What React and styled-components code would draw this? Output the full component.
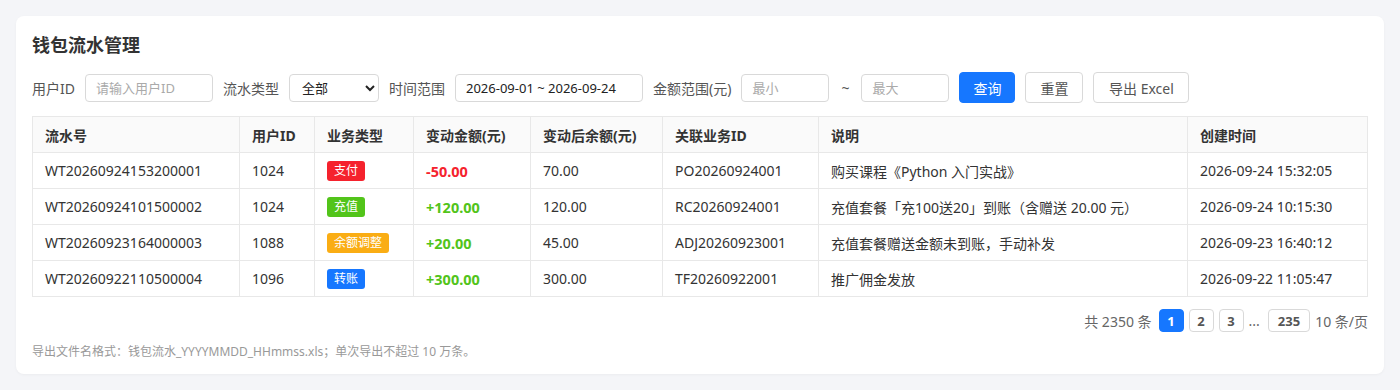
import React, { useState } from "react";
import styled, { createGlobalStyle } from "styled-components";

const GlobalStyle = createGlobalStyle`
  body {
    margin: 0;
    background: #f4f5f8;
    font-family: "Noto Sans", "Noto Sans CJK SC", sans-serif;
    color: #333;
  }
`;

const Page = styled.div`
  padding: 16px;
`;

const Card = styled.div`
  background: #fff;
  border-radius: 8px;
  padding: 16px 16px 14px;
  box-shadow: 0 1px 3px rgba(0, 0, 0, 0.04);
`;

const Title = styled.h2`
  margin: 0 0 14px;
  font-size: 18px;
  font-weight: 700;
  color: #333;
  line-height: 26px;
`;

const Filters = styled.div`
  display: flex;
  align-items: center;
  gap: 10px;
  margin-bottom: 13px;
`;

const Label = styled.span`
  font-size: 14px;
  color: #555;
`;

const Field = styled.input`
  box-sizing: border-box;
  width: ${(p) => p.$w}px;
  height: 28px;
  border: 1px solid #d9d9d9;
  border-radius: 4px;
  padding: 0 10px;
  font: inherit;
  font-size: 13px;
  color: #222;
  &::placeholder {
    color: #aaa;
  }
`;

const Select = styled.select`
  box-sizing: border-box;
  width: 90px;
  height: 28px;
  border: 1px solid #d9d9d9;
  border-radius: 4px;
  padding: 0 8px;
  font: inherit;
  font-size: 13px;
  color: #222;
  background: #fff;
`;

const Tilde = styled.span`
  font-size: 14px;
  color: #555;
  padding: 0 2px;
`;

const Button = styled.button`
  box-sizing: border-box;
  height: 31px;
  min-width: ${(p) => p.$min || 0}px;
  padding: 0 13px;
  border-radius: 4px;
  font: inherit;
  font-size: 14px;
  cursor: pointer;
  border: 1px solid ${(p) => (p.$primary ? "#1677ff" : "#d9d9d9")};
  background: ${(p) => (p.$primary ? "#1677ff" : "#fff")};
  color: ${(p) => (p.$primary ? "#fff" : "#555")};
`;

const Table = styled.table`
  width: 100%;
  table-layout: fixed;
  border-collapse: collapse;
  font-size: 14px;
`;

const Th = styled.th`
  text-align: left;
  font-weight: 700;
  background: #fafafa;
  border: 1px solid #e8e8e8;
  padding: 0 12px;
  height: 35px;
  color: #333;
  white-space: nowrap;
  width: ${(p) => (p.$w ? `${p.$w - 25}px` : "auto")};
`;

const Td = styled.td`
  border: 1px solid #e8e8e8;
  padding: 0 12px;
  height: 35px;
  color: #333;
  white-space: nowrap;
  overflow: hidden;
`;

const Tag = styled.span`
  display: inline-block;
  padding: 0 7px;
  height: 20px;
  line-height: 20px;
  border-radius: 3px;
  font-size: 12px;
  color: #fff;
  background: ${(p) => p.$color};
  vertical-align: middle;
`;

const Amount = styled.span`
  font-weight: 700;
  font-size: 14.5px;
  color: ${(p) => (p.$neg ? "#f5222d" : "#52c41a")};
`;

const Pager = styled.div`
  display: flex;
  justify-content: flex-end;
  align-items: center;
  gap: 5px;
  margin-top: 12px;
  font-size: 14px;
  color: #666;
`;

const Total = styled.span`
  margin-right: 2px;
`;

const PageBtn = styled.button`
  box-sizing: border-box;
  min-width: 25px;
  height: 23px;
  padding: 0 ${(p) => (p.$wide ? 9 : 4)}px;
  border-radius: 4px;
  font: inherit;
  font-size: 13px;
  font-weight: 700;
  border: 1px solid ${(p) => (p.$active ? "#1677ff" : "#d9d9d9")};
  background: ${(p) => (p.$active ? "#1677ff" : "#fff")};
  color: ${(p) => (p.$active ? "#fff" : "#555")};
`;

const Dots = styled.span`
  padding: 0 3px 0 0;
`;

const Note = styled.div`
  margin-top: 10px;
  font-size: 12px;
  color: #999;
`;

const TAGS = {
  支付: "#f5222d",
  充值: "#52c41a",
  余额调整: "#faad14",
  转账: "#1677ff",
};

const rows = [
  ["WT20260924153200001", "1024", "支付", "-50.00", "70.00", "PO20260924001", "购买课程《Python 入门实战》", "2026-09-24 15:32:05"],
  ["WT20260924101500002", "1024", "充值", "+120.00", "120.00", "RC20260924001", "充值套餐「充100送20」到账（含赠送 20.00 元）", "2026-09-24 10:15:30"],
  ["WT20260923164000003", "1088", "余额调整", "+20.00", "45.00", "ADJ20260923001", "充值套餐赠送金额未到账，手动补发", "2026-09-23 16:40:12"],
  ["WT20260922110500004", "1096", "转账", "+300.00", "300.00", "TF20260922001", "推广佣金发放", "2026-09-22 11:05:47"],
];

export default function App() {
  const [userId, setUserId] = useState("");
  const [range, setRange] = useState("2026-09-01 ~ 2026-09-24");

  return (
    <Page>
      <GlobalStyle />
      <Card>
        <Title>钱包流水管理</Title>
        <Filters>
          <Label>用户ID</Label>
          <Field $w={128} placeholder="请输入用户ID" value={userId} onChange={(e) => setUserId(e.target.value)} />
          <Label>流水类型</Label>
          <Select defaultValue="全部">
            <option>全部</option>
            <option>支付</option>
            <option>充值</option>
          </Select>
          <Label>时间范围</Label>
          <Field $w={188} value={range} onChange={(e) => setRange(e.target.value)} />
          <Label>金额范围(元)</Label>
          <Field $w={88} placeholder="最小" />
          <Tilde>~</Tilde>
          <Field $w={88} placeholder="最大" />
          <Button $primary $min={56}>查询</Button>
          <Button $min={58}>重置</Button>
          <Button $min={96}>导出 Excel</Button>
        </Filters>
        <Table>
          <thead>
            <tr>
              <Th $w={207}>流水号</Th>
              <Th $w={75}>用户ID</Th>
              <Th $w={99}>业务类型</Th>
              <Th $w={117}>变动金额(元)</Th>
              <Th $w={132}>变动后余额(元)</Th>
              <Th $w={156}>关联业务ID</Th>
              <Th $w={369}>说明</Th>
              <Th>创建时间</Th>
            </tr>
          </thead>
          <tbody>
            {rows.map((r) => (
              <tr key={r[0]}>
                <Td>{r[0]}</Td>
                <Td>{r[1]}</Td>
                <Td>
                  <Tag $color={TAGS[r[2]]}>{r[2]}</Tag>
                </Td>
                <Td>
                  <Amount $neg={r[3].startsWith("-")}>{r[3]}</Amount>
                </Td>
                <Td>{r[4]}</Td>
                <Td>{r[5]}</Td>
                <Td>{r[6]}</Td>
                <Td>{r[7]}</Td>
              </tr>
            ))}
          </tbody>
        </Table>
        <Pager>
          <Total>共 2350 条</Total>
          <PageBtn $active>1</PageBtn>
          <PageBtn>2</PageBtn>
          <PageBtn>3</PageBtn>
          <Dots>...</Dots>
          <PageBtn $wide>235</PageBtn>
          <span>10 条/页</span>
        </Pager>
        <Note>导出文件名格式：钱包流水_YYYYMMDD_HHmmss.xls；单次导出不超过 10 万条。</Note>
      </Card>
    </Page>
  );
}
